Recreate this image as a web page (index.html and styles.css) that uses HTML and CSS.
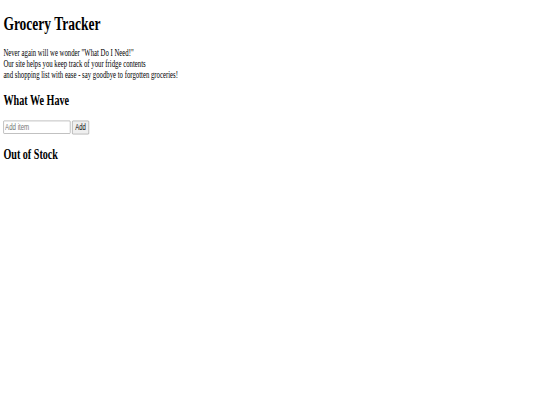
FILE: index.html
```html
<!DOCTYPE html>
<html>
<head>
<meta charset="utf-8">
<link rel="stylesheet" href="styles.css">
<title>Grocery Tracker</title>
</head>
<body>
<div class="page">
  <h1 class="title">Grocery Tracker</h1>
  <p class="intro">Never again will we wonder "What Do I Need!"<br>Our site helps you keep track of your fridge contents<br>and shopping list with ease - say goodbye to forgotten groceries!</p>
  <h2 class="section">What We Have</h2>
  <form class="add-form">
    <input class="add-input" type="text" placeholder="Add item"> <button class="add-btn" type="button">Add</button>
  </form>
  <ul class="list"></ul>
  <h2 class="section">Out of Stock</h2>
  <ul class="list"></ul>
</div>
</body>
</html>
```

FILE: styles.css
```css
html, body {
  margin: 0;
  padding: 0;
  background: #ffffff;
  overflow: hidden;
}
.page {
  display: flow-root;
  padding: 0 8px;
  font-family: "Liberation Serif", "Times New Roman", serif;
  font-size: 16px;
  color: #000;
  transform: scale(0.421875, 0.6);
  transform-origin: 0 0;
}
.title {
  font-size: 32px;
  margin: 21.44px 0;
}
.intro {
  margin: 16px 0;
}
.section {
  font-size: 24px;
  margin: 19.92px 0;
}
.add-form {
  margin: 0;
  display: flex;
  align-items: center;
  gap: 4px;
  height: 23px;
}
.add-input {
  box-sizing: border-box;
  width: 159px;
  height: 22px;
  padding: 1px 3px;
  border: 1px solid #858585;
  border-radius: 2px;
  font-family: "Liberation Sans", Arial, sans-serif;
  font-size: 14.5px;
}
.add-input::placeholder {
  color: #757575;
}
.add-btn {
  box-sizing: border-box;
  height: 23px;
  width: 40px;
  padding: 1px 6px;
  border: 1px solid #858585;
  border-radius: 2px;
  background: #efefef;
  font-family: "Liberation Sans", Arial, sans-serif;
  font-size: 14px;
}
.list {
  margin: 0;
  padding: 0;
}
```
